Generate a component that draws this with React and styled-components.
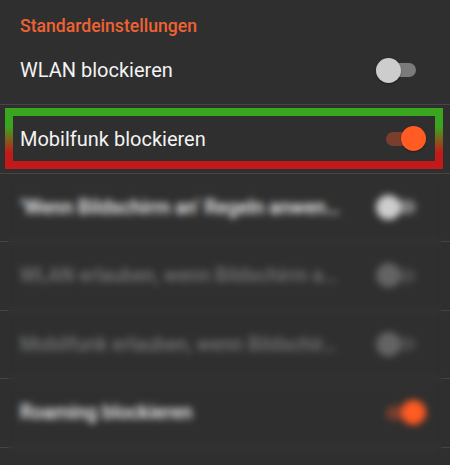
import React from "react";
import styled, { createGlobalStyle } from "styled-components";

const Global = createGlobalStyle`
  html, body { margin: 0; padding: 0; background: #2f2f2f; }
  body { font-family: Roboto, "Noto Sans", "Liberation Sans", sans-serif; }
`;

const Screen = styled.div`
  position: relative;
  width: 450px;
  height: 465px;
  background: #2f2f2f;
  overflow: hidden;
`;

const Header = styled.div`
  height: 36.5px;
  box-sizing: border-box;
  padding: 16px 0 0 20px;
  color: #ef6233;
  font-size: 17.6px;
  font-weight: 500;
  line-height: 20px;
`;

const Row = styled.div`
  position: relative;
  height: 68.5px;
  box-sizing: border-box;
  border-bottom: 1px solid #454545;
  display: flex;
  align-items: center;
  justify-content: space-between;
  padding: 0 24px 0 20px;
`;

const Label = styled.span`
  font-size: ${(p) => (p.$heavy ? 19.4 : 20)}px;
  font-weight: ${(p) => (p.$heavy ? 500 : 400)};
  color: ${(p) => (p.$disabled ? "#727272" : "#f3f3f3")};
  white-space: nowrap;
`;

const SwitchBox = styled.div`
  position: relative;
  width: 50px;
  height: 26px;
  flex: none;
`;

const Track = styled.div`
  position: absolute;
  top: 6px;
  left: ${(p) => (p.$on ? 10 : 0)}px;
  width: 40px;
  height: 14px;
  border-radius: 7px;
  background: ${(p) => (p.$on ? "#7a3e2d" : p.$disabled ? "#474747" : "#7b7b7b")};
`;

const Thumb = styled.div`
  position: absolute;
  top: 0.5px;
  left: ${(p) => (p.$on ? 25 : 0)}px;
  width: 25px;
  height: 25px;
  border-radius: 50%;
  background: ${(p) => (p.$on ? "#ff5b23" : p.$disabled ? "#636363" : "#cdcdcd")};
  box-shadow: 0 1px 2px rgba(0, 0, 0, 0.35);
`;

const Highlight = styled.div`
  position: absolute;
  left: 5px;
  right: 7px;
  top: 2.5px;
  bottom: 4px;
  border: 8px solid transparent;
  border-image: linear-gradient(to bottom, #3aa51f 0%, #3aa51f 25%, #c21a1a 80%, #c21a1a 100%) 1;
  pointer-events: none;
`;

const Blur = styled.div`
  position: absolute;
  left: 8px;
  right: 8px;
  top: 175px;
  bottom: 0;
  backdrop-filter: blur(3.5px);
  -webkit-backdrop-filter: blur(3.5px);
  pointer-events: none;
`;

function Switch({ on, disabled }) {
  return (
    <SwitchBox>
      <Track $on={on} $disabled={disabled} />
      <Thumb $on={on} $disabled={disabled} />
    </SwitchBox>
  );
}

const rows = [
  { label: "\u2019Wenn Bildschirm an\u2019 Regeln anwen\u2026", on: false },
  { label: "WLAN erlauben, wenn Bildschirm a\u2026", on: false, disabled: true },
  { label: "Mobilfunk erlauben, wenn Bildschir\u2026", on: false, disabled: true },
  { label: "Roaming blockieren", on: true },
];

export default function App() {
  return (
    <>
      <Global />
      <Screen>
        <Header>Standardeinstellungen</Header>
        <Row>
          <Label>WLAN blockieren</Label>
          <Switch on={false} />
        </Row>
        <Row>
          <Label>Mobilfunk blockieren</Label>
          <Switch on />
          <Highlight />
        </Row>
        {rows.map((r) => (
          <Row key={r.label}>
            <Label $heavy $disabled={r.disabled}>{r.label}</Label>
            <Switch on={r.on} disabled={r.disabled} />
          </Row>
        ))}
        <Blur />
      </Screen>
    </>
  );
}
